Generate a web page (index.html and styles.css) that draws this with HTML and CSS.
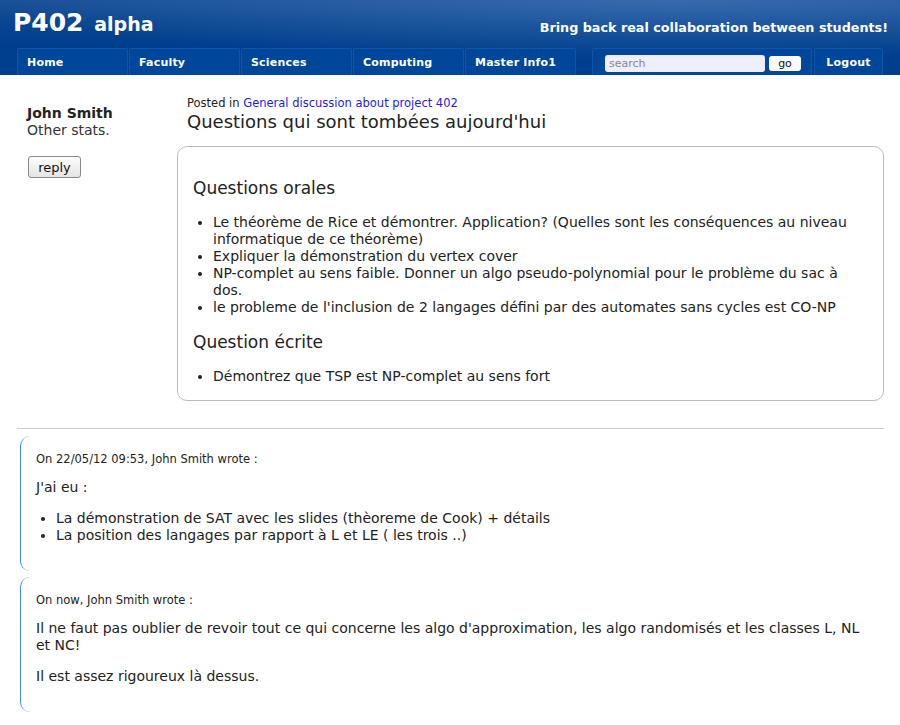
FILE: index.html
```html
<!DOCTYPE html>
<html>
<head>
<meta charset="utf-8">
<title>P402 alpha</title>
<link rel="stylesheet" href="styles.css">
</head>
<body>
<header class="header">
  <div class="brand-row">
    <h1 class="brand">P402 <span class="brand-sub">alpha</span></h1>
    <div class="tagline">Bring back real collaboration between students!</div>
  </div>
  <nav class="nav">
    <a class="tab" href="#">Home</a>
    <a class="tab" href="#">Faculty</a>
    <a class="tab" href="#">Sciences</a>
    <a class="tab" href="#">Computing</a>
    <a class="tab" href="#">Master Info1</a>
    <form class="tab search">
      <input class="search-input" type="text" placeholder="search">
      <button class="go" type="button">go</button>
    </form>
    <a class="tab logout" href="#">Logout</a>
  </nav>
</header>

<main class="page">
  <section class="post">
    <aside class="author">
      <div class="author-name">John Smith</div>
      <div class="author-stats">Other stats.</div>
      <button class="reply" type="button">reply</button>
    </aside>
    <div class="post-main">
      <div class="posted-in">Posted in <a href="#">General discussion about project 402</a></div>
      <h2 class="post-title">Questions qui sont tombées aujourd'hui</h2>
      <div class="post-box">
        <h3>Questions orales</h3>
        <ul>
          <li>Le théorème de Rice et démontrer. Application? (Quelles sont les conséquences au niveau informatique de ce théorème)</li>
          <li>Expliquer la démonstration du vertex cover</li>
          <li>NP-complet au sens faible. Donner un algo pseudo-polynomial pour le problème du sac à dos.</li>
          <li>le probleme de l'inclusion de 2 langages défini par des automates sans cycles est CO-NP</li>
        </ul>
        <h3>Question écrite</h3>
        <ul>
          <li>Démontrez que TSP est NP-complet au sens fort</li>
        </ul>
      </div>
    </div>
  </section>

  <hr class="sep">

  <article class="comment">
    <div class="comment-meta">On 22/05/12 09:53, John Smith wrote :</div>
    <p>J'ai eu :</p>
    <ul>
      <li>La démonstration de SAT avec les slides (thèoreme de Cook) + détails</li>
      <li>La position des langages par rapport à L et LE ( les trois ..)</li>
    </ul>
  </article>

  <article class="comment">
    <div class="comment-meta">On now, John Smith wrote :</div>
    <p>Il ne faut pas oublier de revoir tout ce qui concerne les algo d'approximation, les algo randomisés et les classes L, NL et NC!</p>
    <p>Il est assez rigoureux là dessus.</p>
  </article>
</main>
</body>
</html>
```

FILE: styles.css
```css
* { box-sizing: border-box; }

body {
  margin: 0;
  font-family: "DejaVu Sans", Verdana, sans-serif;
  color: #222;
  background: #fff;
}

.header {
  height: 75px;
  background:
    radial-gradient(ellipse 700px 60px at 75% 0%, rgba(90,140,200,0.45), rgba(90,140,200,0) 100%),
    linear-gradient(to bottom, #1b4f96 0%, #0a4590 30%, #003f8e 60%, #003f8e 100%);
  color: #fff;
  display: flex;
  flex-direction: column;
}

.brand-row {
  display: flex;
  justify-content: space-between;
  align-items: flex-end;
  padding: 0 12px 0 13px;
  height: 40px;
}

.brand {
  margin: 0;
  font-size: 25px;
  font-weight: bold;
  line-height: 1;
  padding-bottom: 5px;
}

.brand-sub { font-size: 19px; margin-left: 2px; }

.tagline {
  font-size: 12.75px;
  font-weight: bold;
  padding-bottom: 5px;
}

.nav {
  display: flex;
  margin-top: 8px;
  padding-left: 17px;
  height: 27px;
}

.tab {
  display: flex;
  align-items: center;
  width: 111px;
  margin-right: 1px;
  padding: 0 0 0 9px;
  background: #00469a;
  border: 1px solid #1454a4;
  border-bottom: none;
  border-radius: 2px 2px 0 0;
  color: #fff;
  font-size: 11px;
  font-weight: bold;
  text-decoration: none;
  letter-spacing: 0.2px;
}

.tab.search {
  width: 220px;
  margin: 0 2px 0 15px;
  padding: 0 0 0 12px;
  gap: 4px;
}

.search-input {
  width: 160px;
  height: 17px;
  border: none;
  border-radius: 3px;
  background: #eeeefc;
  font-family: "DejaVu Sans", sans-serif;
  font-size: 11px;
  padding: 0 4px;
  margin-top: 2px;
}
.search-input::placeholder { color: #888; }

.go {
  width: 32px;
  height: 15px;
  border: none;
  border-radius: 3px;
  background: #fafafa;
  font-family: "DejaVu Sans", sans-serif;
  font-size: 11px;
  padding: 0;
  margin-top: 2px;
  color: #111;
}

.tab.logout {
  width: 69px;
  padding: 0;
  justify-content: center;
}

.page {
  padding: 0 16px 0 17px;
}

.post {
  display: flex;
  padding-top: 20px;
}

.author {
  width: 160px;
  padding-left: 10px;
  padding-top: 10px;
  font-size: 14px;
}

.author-name { font-weight: bold; line-height: 17px; }
.author-stats { line-height: 17px; color: #333; }

.reply {
  margin-top: 17px;
  margin-left: 1px;
  width: 53px;
  height: 22px;
  font-family: "DejaVu Sans", sans-serif;
  font-size: 13px;
  color: #111;
  background: linear-gradient(#fdfdfd, #e4e4e4);
  border: 1px solid #8a8a8a;
  border-radius: 3px;
  padding: 0;
}

.post-main { flex: 1; }

.posted-in {
  font-size: 11.5px;
  padding-left: 10px;
  line-height: 14px;
  margin-top: 1px;
}
.posted-in a { color: #1a1aee; text-decoration: none; }

.post-title {
  margin: 1px 0 13px;
  padding-left: 10px;
  font-size: 18px;
  font-weight: normal;
  line-height: 22px;
}

.post-box {
  border: 1px solid #bbb;
  border-radius: 10px;
  padding: 30px 15px 15px;
  font-size: 14px;
}

.post-box h3 {
  margin: 0 0 15px;
  font-size: 17px;
  font-weight: normal;
  line-height: 22px;
}

ul {
  margin: 0 0 15px;
  padding-left: 20px;
}
li { line-height: 17px; }

.post-box ul:last-child { margin-bottom: 0; }

.sep {
  margin: 27px 0 7px;
  border: none;
  border-top: 1px solid #ccc;
}

.comment {
  margin: 0 0 6px 3px;
  border-left: 1px solid #3b8ef0;
  border-radius: 10px 0 0 10px;
  padding: 16px 15px 13px 15px;
  font-size: 14px;
}

.comment-meta {
  font-size: 11.5px;
  line-height: 14px;
  margin-bottom: 13px;
}

.comment p {
  margin: 0 0 14px;
  line-height: 17px;
}

.comment ul { margin: 0 0 14px; }
```
